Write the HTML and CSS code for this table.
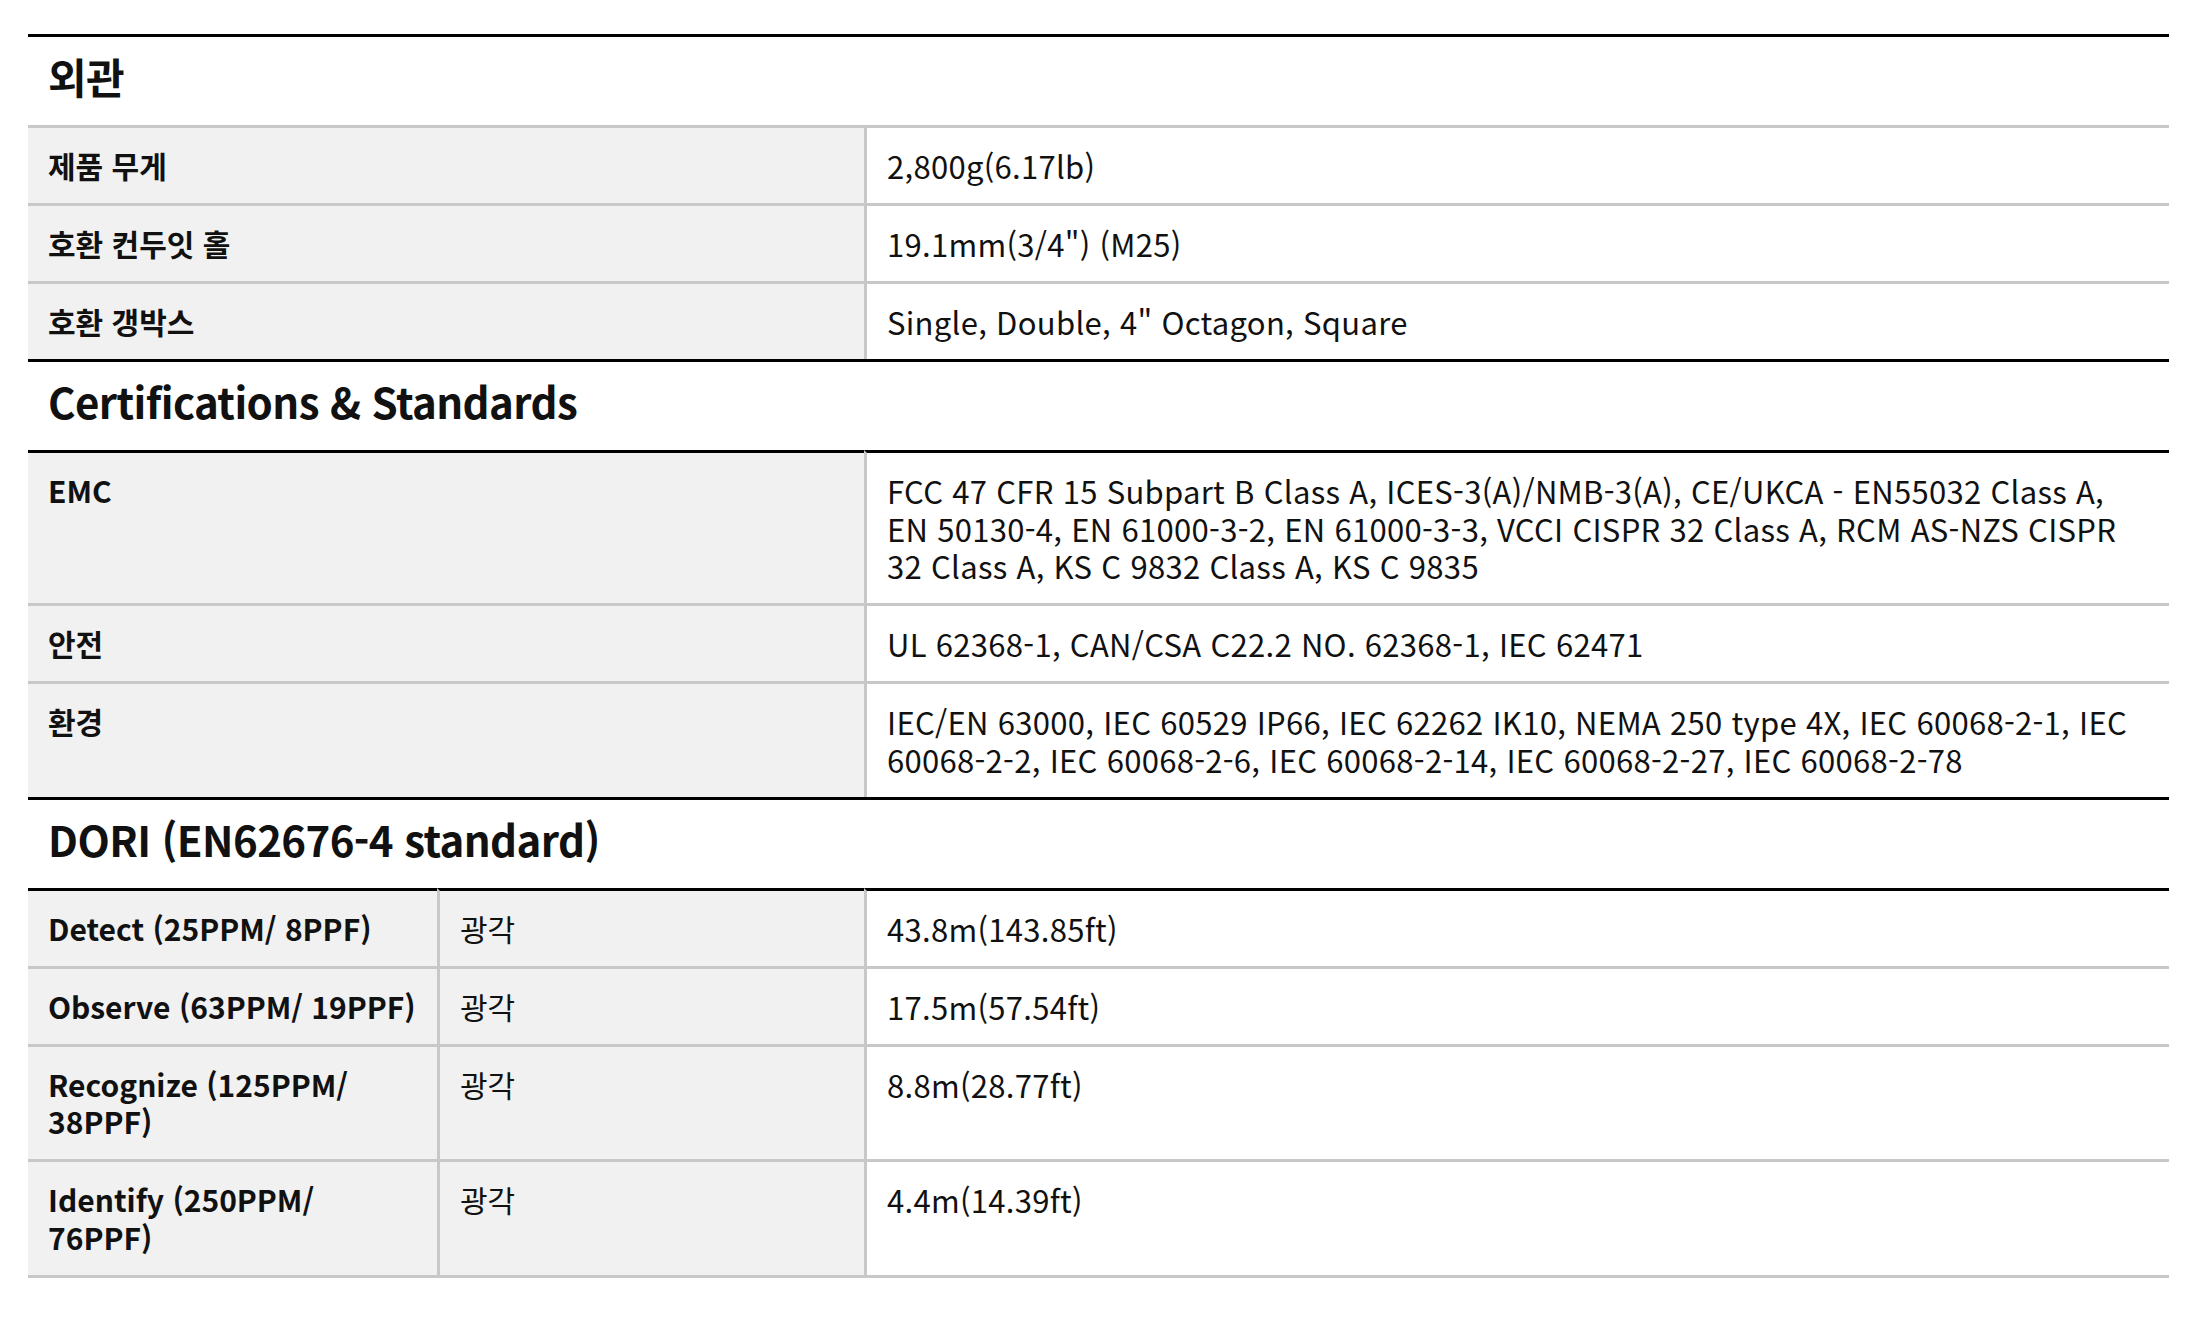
FILE: index.html
```html
<!DOCTYPE html>
<html lang="ko">
<head>
<meta charset="utf-8">
<title>Specifications</title>
<link rel="stylesheet" href="styles.css">
</head>
<body>
<div class="wrap">
<table class="spec">
<colgroup><col class="c1"><col class="c2"><col class="c3"></colgroup>
<tbody>
<tr class="sec"><th colspan="3">외관</th></tr>
<tr><th colspan="2" class="lbl">제품 무게</th><td class="val">2,800g(6.17lb)</td></tr>
<tr><th colspan="2" class="lbl">호환 컨두잇 홀</th><td class="val">19.1mm(3/4") (M25)</td></tr>
<tr><th colspan="2" class="lbl">호환 갱박스</th><td class="val">Single, Double, 4" Octagon, Square</td></tr>

<tr class="sec"><th colspan="3">Certifications &amp; Standards</th></tr>
<tr class="first"><th colspan="2" class="lbl">EMC</th><td class="val">FCC 47 CFR 15 Subpart B Class A, ICES-3(A)/NMB-3(A), CE/UKCA - EN55032 Class A, EN 50130-4, EN 61000-3-2, EN 61000-3-3, VCCI CISPR 32 Class A, RCM AS-NZS CISPR 32 Class A, KS C 9832 Class A, KS C 9835</td></tr>
<tr><th colspan="2" class="lbl">안전</th><td class="val">UL 62368-1, CAN/CSA C22.2 NO. 62368-1, IEC 62471</td></tr>
<tr><th colspan="2" class="lbl">환경</th><td class="val">IEC/EN 63000, IEC 60529 IP66, IEC 62262 IK10, NEMA 250 type 4X, IEC 60068-2-1, IEC 60068-2-2, IEC 60068-2-6, IEC 60068-2-14, IEC 60068-2-27, IEC 60068-2-78</td></tr>

<tr class="sec"><th colspan="3">DORI (EN62676-4 standard)</th></tr>
<tr class="first"><th class="lbl">Detect (25PPM/ 8PPF)</th><td class="sub">광각</td><td class="val">43.8m(143.85ft)</td></tr>
<tr><th class="lbl">Observe (63PPM/ 19PPF)</th><td class="sub">광각</td><td class="val">17.5m(57.54ft)</td></tr>
<tr><th class="lbl">Recognize (125PPM/ 38PPF)</th><td class="sub">광각</td><td class="val">8.8m(28.77ft)</td></tr>
<tr class="last"><th class="lbl">Identify (250PPM/ 76PPF)</th><td class="sub">광각</td><td class="val">4.4m(14.39ft)</td></tr>
</tbody>
</table>
</div>
</body>
</html>
```

FILE: styles.css
```css
html, body {
  margin: 0;
  padding: 0;
  background: #ffffff;
}

body {
  font-family: "Noto Sans CJK KR", "Noto Sans", sans-serif;
  color: #111111;
}

.wrap {
  padding: 34px 0 40px 28px;
}

.spec {
  width: 2141px;
  table-layout: fixed;
  border-collapse: separate;
  border-spacing: 0;
}

.spec .c1 { width: 409px; }
.spec .c2 { width: 427px; }

.spec th,
.spec td {
  box-sizing: border-box;
  text-align: left;
  vertical-align: top;
  border-top: 3px solid #c8c8c8;
  padding: 19px 20px 18.5px 20px;
  font-size: 30px;
  line-height: 37.5px;
}

.spec .sec th {
  border-top: 3px solid #000000;
  background: #ffffff;
  font-size: 42px;
  font-weight: 700;
  line-height: 47px;
  padding: 15px 20px 26px 20px;
  letter-spacing: -0.6px;
}

.spec .first th,
.spec .first td {
  border-top-color: #000000;
}

.spec .lbl {
  background: #f1f1f1;
  font-weight: 700;
  color: #111111;
}

.spec .sub {
  background: #f1f1f1;
  font-weight: 400;
  border-left: 3px solid #c8c8c8;
}

.spec .val {
  background: #ffffff;
  font-weight: 400;
  font-size: 31px;
  letter-spacing: 0.3px;
  border-left: 3px solid #c8c8c8;
}

.spec .last th,
.spec .last td {
  border-bottom: 3px solid #c8c8c8;
}
```
